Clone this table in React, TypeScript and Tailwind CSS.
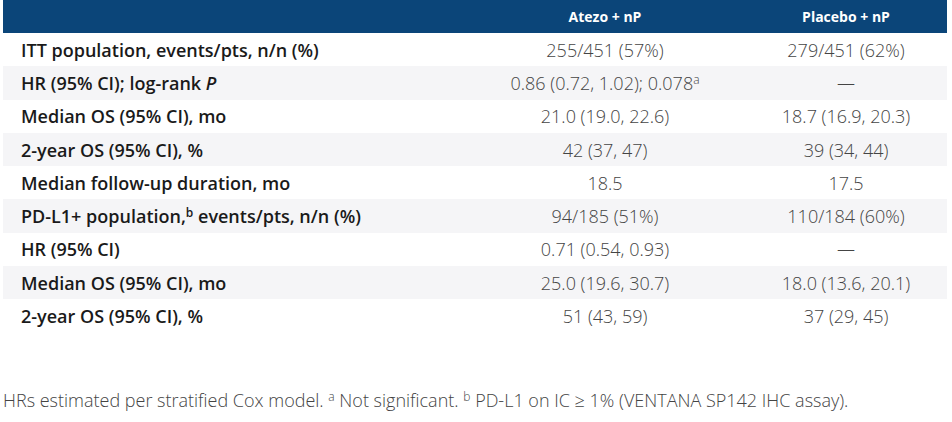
const rows: { label: React.ReactNode; a: React.ReactNode; b: React.ReactNode }[] = [
  { label: "ITT population, events/pts, n/n (%)", a: "255/451 (57%)", b: "279/451 (62%)" },
  {
    label: (
      <>
        HR (95% CI); log-rank <i>P</i>
      </>
    ),
    a: (
      <>
        0.86 (0.72, 1.02); 0.078<sup className="text-[12px]">a</sup>
      </>
    ),
    b: "—",
  },
  { label: "Median OS (95% CI), mo", a: "21.0 (19.0, 22.6)", b: "18.7 (16.9, 20.3)" },
  { label: "2-year OS (95% CI), %", a: "42 (37, 47)", b: "39 (34, 44)" },
  { label: "Median follow-up duration, mo", a: "18.5", b: "17.5" },
  {
    label: (
      <>
        PD-L1+ population,<sup className="text-[12px]">b</sup> events/pts, n/n (%)
      </>
    ),
    a: "94/185 (51%)",
    b: "110/184 (60%)",
  },
  { label: "HR (95% CI)", a: "0.71 (0.54, 0.93)", b: "—" },
  { label: "Median OS (95% CI), mo", a: "25.0 (19.6, 30.7)", b: "18.0 (13.6, 20.1)" },
  { label: "2-year OS (95% CI), %", a: "51 (43, 59)", b: "37 (29, 45)" },
];

export default function App() {
  return (
    <div
      className="w-[952px] h-[422px] bg-white overflow-hidden"
      style={{ fontFamily: '"Open Sans", sans-serif' }}
    >
      <div className="ml-[3px] w-[944px]">
        {/* Header */}
        <div className="grid grid-cols-[462px_280px_202px] h-[33px] items-center bg-[#0b4579] text-white text-[14px] font-bold">
          <div />
          <div className="text-center">Atezo + nP</div>
          <div className="text-center">Placebo + nP</div>
        </div>

        {/* Body rows */}
        {rows.map((r, i) => (
          <div
            key={i}
            className={
              "grid grid-cols-[462px_280px_202px] h-[33.3px] items-center text-[18px] " +
              (i % 2 === 1 ? "bg-[#f5f5f7]" : "bg-white")
            }
          >
            <div className="pl-[18px] font-semibold text-[#1a1a1a] leading-none">{r.label}</div>
            <div className="text-center font-light text-[#444] leading-none">{r.a}</div>
            <div className="text-center font-light text-[#444] leading-none">{r.b}</div>
          </div>
        ))}
      </div>

      {/* Footnote */}
      <p className="mt-[58px] ml-[3px] text-[18px] font-light text-[#444] leading-none">
        HRs estimated per stratified Cox model. <sup className="text-[12px]">a</sup> Not significant.{" "}
        <sup className="text-[12px]">b</sup> PD-L1 on IC ≥ 1% (VENTANA SP142 IHC assay).
      </p>
    </div>
  );
}
